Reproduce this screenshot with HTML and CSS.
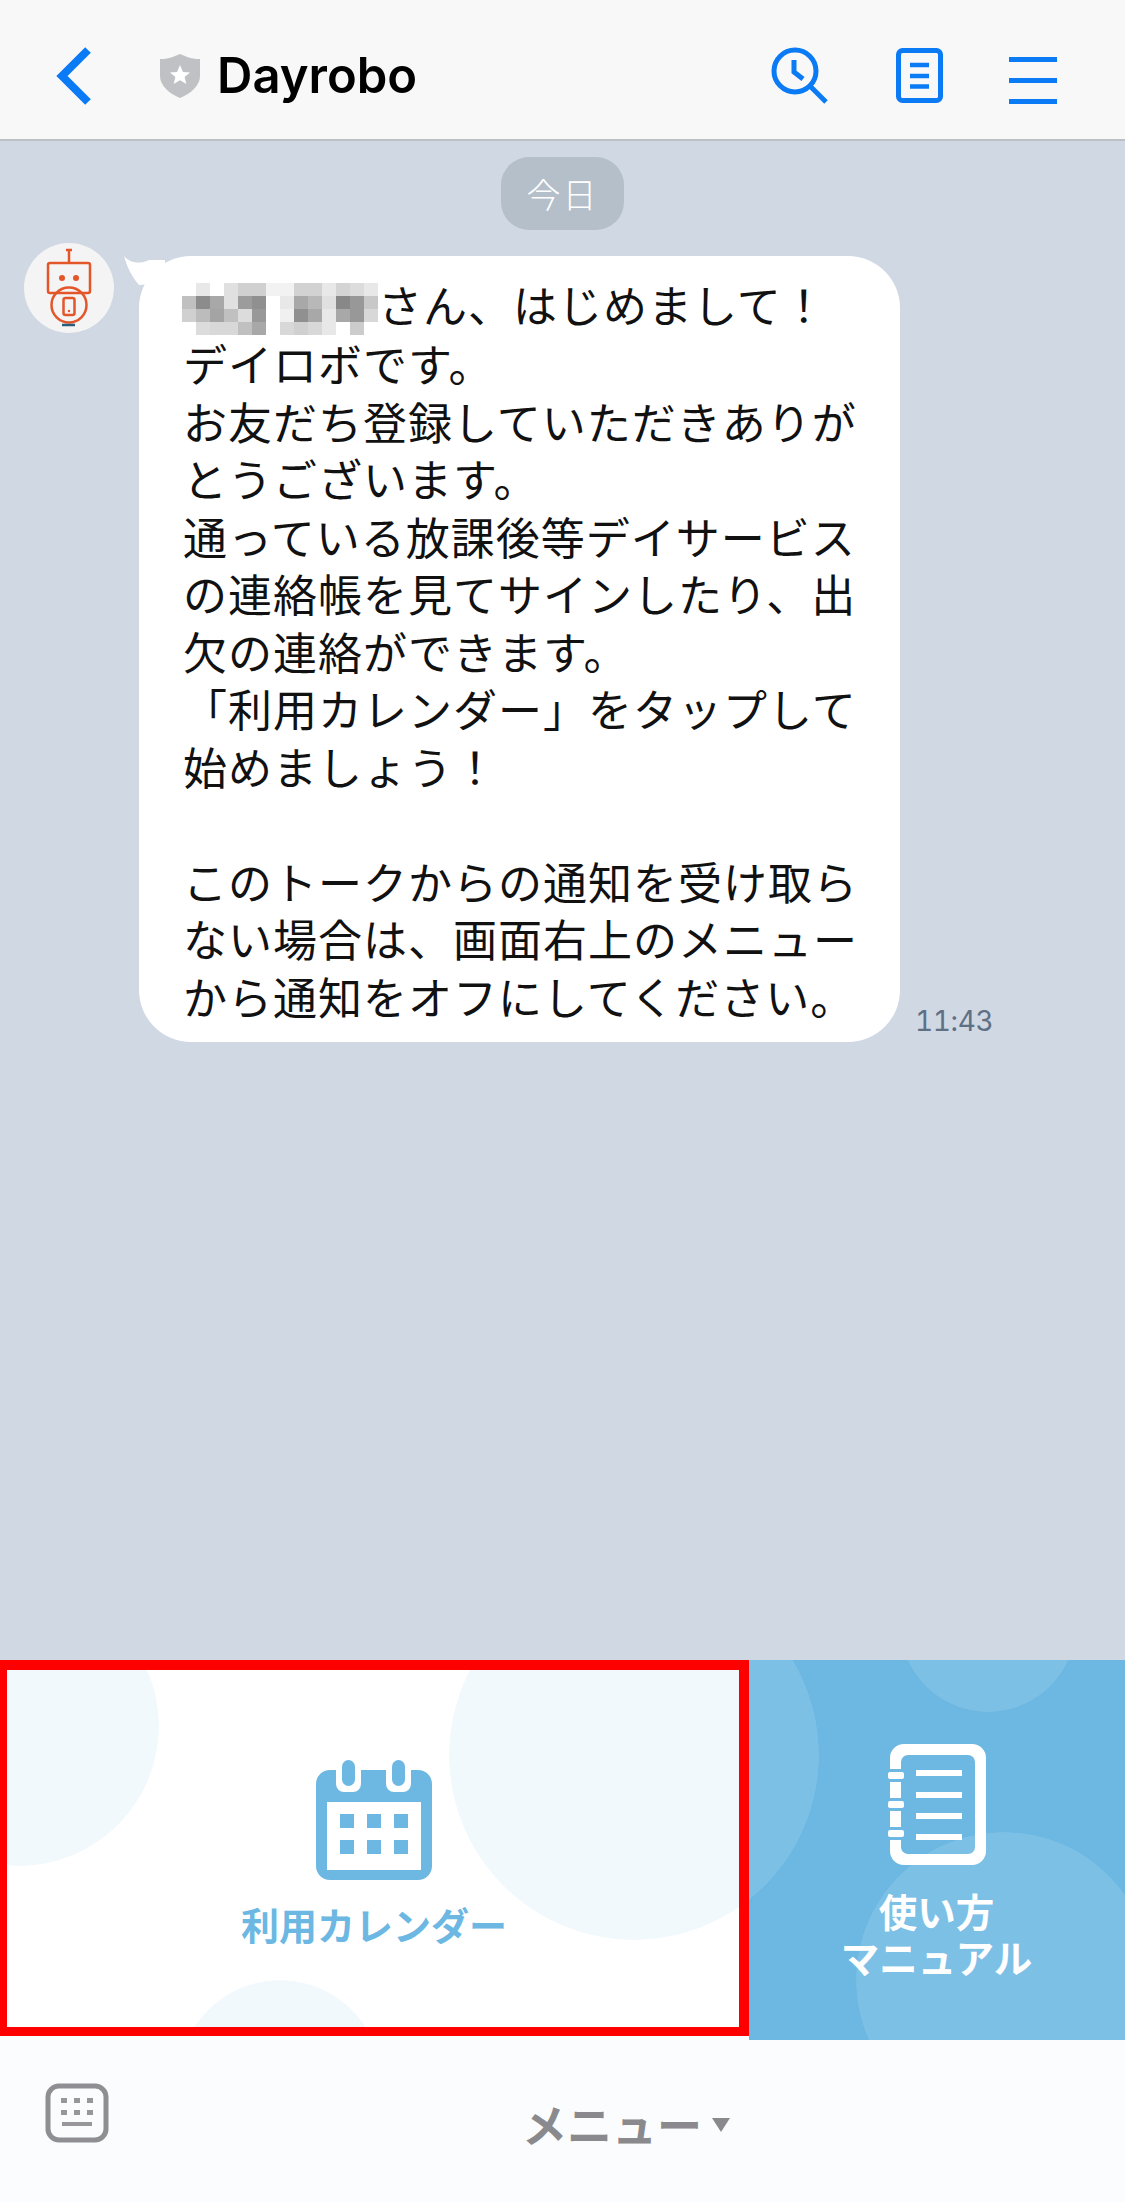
FILE: index.html
```html
<!DOCTYPE html>
<html lang="ja">
<head>
  <meta charset="UTF-8" />
  <meta name="viewport" content="width=device-width, initial-scale=1" />
  <title>Dayrobo</title>
  <link rel="stylesheet" href="styles.css">
</head>
<body>
  <header class="topbar">
    <svg class="back-icon" width="36" height="60" viewBox="0 0 36 60"><path d="M32 4 L6 30 L32 56" fill="none" stroke="#0a7bf5" stroke-width="8"/></svg>
    <svg class="shield-icon" width="40" height="44" viewBox="0 0 40 44">
      <path d="M0 5 C8 5 13 3 20 0 C27 3 32 5 40 5 L40 22 C40 32 30 40 20 44 C10 40 0 32 0 22 Z" fill="#bfc1c4"/>
      <path d="M20 11 L23 18 L30 18.500 L24.600 23 L26.400 30 L20 26.200 L13.600 30 L15.400 23 L10 18.500 L17 18 Z" fill="#fff"/>
    </svg>
    <h1 class="title">Dayrobo</h1>
    <div class="topbar-actions">
      <svg class="history-icon" width="60" height="60" viewBox="0 0 60 60" fill="none" stroke="#0a7bf5" stroke-width="5">
        <circle cx="25" cy="25" r="21"/>
        <path d="M24 14 V26 L33 33"/>
        <path d="M41 41 L56 56"/>
      </svg>
      <svg width="47" height="55" viewBox="0 0 47 55" fill="none" stroke="#0a7bf5">
        <rect x="2.500" y="2.500" width="42" height="50" rx="4" stroke-width="5"/>
        <path d="M14 17 H33 M14 28 H33 M14 38.500 H33" stroke-width="4.500"/>
      </svg>
      <div class="burger"><span></span><span></span><span></span></div>
    </div>
  </header>

  <main class="chat">
    <div class="date-pill">今日</div>
    <div class="message">
      <svg class="avatar" width="90" height="90" viewBox="0 0 90 90">
        <circle cx="45" cy="45" r="45" fill="#f4f4f4"/>
        <g fill="none" stroke="#e2562a" stroke-width="2.500">
          <path d="M45 8 V19"/>
          <path d="M42 7 H48"/>
          <rect x="24" y="20" width="42" height="30" rx="2"/>
          <circle cx="45" cy="62" r="17.500"/>
          <rect x="39.500" y="55" width="11" height="17" rx="2"/>
        </g>
        <circle cx="38" cy="35" r="3" fill="#e2562a"/>
        <circle cx="52" cy="35" r="3" fill="#e2562a"/>
        <circle cx="45" cy="68" r="1.200" fill="#e2562a"/>
        <path d="M38 82 H51" stroke="#2b5d7d" stroke-width="2.500"/>
      </svg>
      <div class="bubble">
        <svg class="bubble-tail" width="42" height="32" viewBox="0 0 42 32"><path d="M1 1 C6 7 15 10 26 5 L42 5 L42 28 L16 30 C9 22 4 12 1 1 Z" fill="#fff"/></svg>
        <svg class="mosaic" width="196" height="52" viewBox="0 0 14 4" preserveAspectRatio="none">
          <rect x="1" y="0" width="1" height="1" fill="#e8e8e8"/><rect x="3" y="0" width="1" height="1" fill="#e0e0e0"/><rect x="4" y="0" width="2" height="1" fill="#d0d0d0"/><rect x="6" y="0" width="2" height="1" fill="#f2f2f2"/><rect x="8" y="0" width="2" height="1" fill="#d2d2d2"/><rect x="10" y="0" width="1" height="1" fill="#e8e8e8"/><rect x="11" y="0" width="1" height="1" fill="#d4d4d4"/><rect x="12" y="0" width="1" height="1" fill="#dcdcdc"/><rect x="13" y="0" width="1" height="1" fill="#e8e8e8"/>
          <rect x="0" y="1" width="1" height="1" fill="#c0c0c0"/><rect x="1" y="1" width="1" height="1" fill="#8c8c8c"/><rect x="2" y="1" width="1" height="1" fill="#a8a8a8"/><rect x="3" y="1" width="1" height="1" fill="#e0e0e0"/><rect x="4" y="1" width="1" height="1" fill="#9c9c9c"/><rect x="5" y="1" width="1" height="1" fill="#909090"/><rect x="7" y="1" width="1" height="1" fill="#e8e8e8"/><rect x="8" y="1" width="1" height="1" fill="#a8a8a8"/><rect x="9" y="1" width="1" height="1" fill="#b8b8b8"/><rect x="10" y="1" width="1" height="1" fill="#e0e0e0"/><rect x="11" y="1" width="1" height="1" fill="#888"/><rect x="12" y="1" width="1" height="1" fill="#989898"/><rect x="13" y="1" width="1" height="1" fill="#c8c8c8"/>
          <rect x="0" y="2" width="1" height="1" fill="#d0d0d0"/><rect x="1" y="2" width="1" height="1" fill="#bcbcbc"/><rect x="2" y="2" width="1" height="1" fill="#a4a4a4"/><rect x="3" y="2" width="1" height="1" fill="#c0c0c0"/><rect x="4" y="2" width="1" height="1" fill="#dcdcdc"/><rect x="5" y="2" width="1" height="1" fill="#989898"/><rect x="7" y="2" width="1" height="1" fill="#f0f0f0"/><rect x="8" y="2" width="1" height="1" fill="#909090"/><rect x="9" y="2" width="1" height="1" fill="#a8a8a8"/><rect x="10" y="2" width="1" height="1" fill="#e8e8e8"/><rect x="11" y="2" width="1" height="1" fill="#a8a8a8"/><rect x="12" y="2" width="1" height="1" fill="#989898"/><rect x="13" y="2" width="1" height="1" fill="#d8d8d8"/>
          <rect x="1" y="3" width="1" height="1" fill="#dcdcdc"/><rect x="2" y="3" width="1" height="1" fill="#d8d8d8"/><rect x="3" y="3" width="1" height="1" fill="#d8d8d8"/><rect x="4" y="3" width="1" height="1" fill="#c0c0c0"/><rect x="5" y="3" width="1" height="1" fill="#a8a8a8"/><rect x="7" y="3" width="1" height="1" fill="#d8d8d8"/><rect x="8" y="3" width="1" height="1" fill="#d0d0d0"/><rect x="9" y="3" width="1" height="1" fill="#d8d8d8"/><rect x="10" y="3" width="1" height="1" fill="#e8e8e8"/><rect x="12" y="3" width="1" height="1" fill="#cccccc"/>
        </svg>さん、はじめまして！<br>
        デイロボです。<br>
        お友だち登録していただきありが<br>
        とうございます。<br>
        通っている放課後等デイサービス<br>
        の連絡帳を見てサインしたり、出<br>
        欠の連絡ができます。<br>
        「利用カレンダー」をタップして<br>
        始めましょう！<br>
        <br>
        このトークからの通知を受け取ら<br>
        ない場合は、画面右上のメニュー<br>
        から通知をオフにしてください。
      </div>
      <time class="sent-at">11:43</time>
    </div>
  </main>

  <section class="richmenu">
    <a class="menu-cell menu-calendar">
      <svg width="116" height="120" viewBox="0 0 116 120">
        <path d="M14 10 H20 V24 A8 8 0 0 0 28 32 H37 A8 8 0 0 0 45 24 V10 H70 V24 A8 8 0 0 0 78 32 H87 A8 8 0 0 0 95 24 V10 H102 A14 14 0 0 1 116 24 V106 A14 14 0 0 1 102 120 H14 A14 14 0 0 1 0 106 V24 A14 14 0 0 1 14 10 Z" fill="#6cb8e2"/>
        <rect x="26" y="0" width="13" height="26" rx="6.500" fill="#6cb8e2"/>
        <rect x="76" y="0" width="13" height="26" rx="6.500" fill="#6cb8e2"/>
        <rect x="11" y="42" width="94" height="68" fill="#fff"/>
        <g fill="#6cb8e2">
          <rect x="24" y="54" width="14" height="14"/><rect x="51" y="54" width="14" height="14"/><rect x="78" y="54" width="14" height="14"/>
          <rect x="24" y="80" width="14" height="14"/><rect x="51" y="80" width="14" height="14"/><rect x="78" y="80" width="14" height="14"/>
        </g>
      </svg>
      <span class="menu-label">利用カレンダー</span>
    </a>
    <a class="menu-cell menu-manual">
      <svg width="98" height="121" viewBox="0 0 98 121" fill="#fff">
        <path d="M16 0 H84 A14 14 0 0 1 98 14 V107 A14 14 0 0 1 84 121 H16 A14 14 0 0 1 2 107 V14 A14 14 0 0 1 16 0 Z M20 11 A7 7 0 0 0 13 18 V103 A7 7 0 0 0 20 110 H80 A7 7 0 0 0 87 103 V18 A7 7 0 0 0 80 11 Z" fill-rule="evenodd"/>
        <g fill="#6cb8e2">
          <rect x="0" y="25" width="16" height="13"/>
          <rect x="0" y="54" width="16" height="13"/>
          <rect x="0" y="83" width="16" height="13"/>
        </g>
        <rect x="0" y="28" width="16" height="7" rx="2"/>
        <rect x="0" y="57" width="16" height="7" rx="2"/>
        <rect x="0" y="86" width="16" height="7" rx="2"/>
        <rect x="28" y="26" width="46" height="6"/>
        <rect x="28" y="48" width="46" height="6"/>
        <rect x="28" y="69" width="46" height="6"/>
        <rect x="28" y="90" width="46" height="6"/>
      </svg>
      <span class="menu-label">使い方<br>マニュアル</span>
    </a>
  </section>

  <footer class="bottombar">
    <svg class="keyboard-icon" width="64" height="60" viewBox="0 0 64 60">
      <rect x="3" y="3" width="58" height="54" rx="11" fill="none" stroke="#8e8e93" stroke-width="5"/>
      <g fill="#97979b">
        <rect x="16" y="15" width="6" height="5"/><rect x="29" y="15" width="6" height="5"/><rect x="42" y="15" width="6" height="5"/>
        <rect x="16" y="27" width="6" height="5"/><rect x="29" y="27" width="6" height="5"/><rect x="42" y="27" width="6" height="5"/>
        <rect x="17" y="39" width="30" height="4"/>
      </g>
    </svg>
    <div class="menu-toggle">メニュー<span class="menu-caret"></span></div>
  </footer>
</body>
</html>
```

FILE: styles.css
```css
* {
  box-sizing: border-box;
}
body {
  margin: 0;
  width: 1125px;
  height: 2202px;
  display: flex;
  flex-direction: column;
  overflow: hidden;
  font-family: "Noto Sans CJK JP", "Noto Sans", sans-serif;
  background-color: #d0d8e4;
}
.topbar {
  height: 141px;
  flex: none;
  display: flex;
  align-items: center;
  padding-left: 56px;
  padding-top: 12px;
  background-color: #f8f8f8;
  border-bottom: 2px solid #bcbfc4;
}
.shield-icon {
  margin-left: 68px;
}
.title {
  margin: 0 0 0 17px;
  font-family: Inter, sans-serif;
  font-size: 49px;
  font-weight: 600;
  color: #000;
}
.topbar-actions {
  margin-left: auto;
  display: flex;
  align-items: center;
  gap: 70px;
  padding-right: 68px;
}
.topbar-actions svg {
  display: block;
}
.history-icon {
  margin-right: -4px;
}
.burger {
  width: 48px;
  display: flex;
  flex-direction: column;
  gap: 16px;
  margin-top: 9px;
  margin-left: -4px;
}
.burger span {
  height: 5px;
  background-color: #0a7bf5;
}
.chat {
  flex: 1;
  padding-top: 16px;
}
.date-pill {
  width: 123px;
  height: 73px;
  margin-left: 501px;
  display: flex;
  align-items: center;
  justify-content: center;
  border-radius: 28px;
  background-color: #b4bfca;
  color: #fff;
  font-size: 34px;
  font-weight: 300;
  letter-spacing: 2px;
}
.message {
  display: flex;
  align-items: flex-start;
  padding-left: 24px;
  margin-top: 13px;
}
.avatar {
  flex: none;
}
.bubble {
  position: relative;
  margin-left: 25px;
  margin-top: 13px;
  width: 761px;
  height: 786px;
  padding: 20px 0 0 44px;
  border-radius: 52px;
  background-color: #fff;
  color: #111;
  font-size: 44px;
  line-height: 57.5px;
  letter-spacing: 1px;
  white-space: nowrap;
}
.bubble-tail {
  position: absolute;
  left: -16px;
  top: -1px;
}
.mosaic {
  vertical-align: -12px;
  margin-left: -1px;
}
.sent-at {
  align-self: flex-end;
  margin-left: 15px;
  margin-bottom: 4px;
  font-family: Inter, sans-serif;
  font-size: 28px;
  font-variant-numeric: tabular-nums;
  letter-spacing: -0.4px;
  line-height: 34px;
  color: #5f7085;
}
.richmenu {
  height: 380px;
  flex: none;
  display: flex;
  align-items: flex-start;
  background-color: #fbfcfd;
}
.menu-cell {
  display: flex;
  flex-direction: column;
  align-items: center;
  font-weight: 700;
  line-height: 46px;
  text-align: center;
}
.menu-calendar {
  width: 749px;
  height: 376px;
  padding-top: 90px;
  border-style: solid;
  border-color: #fe0000;
  border-width: 10px 10px 9px 7px;
  color: #6cb8e2;
  background-color: #fff;
  background-origin: border-box;
  background-clip: border-box;
  background-image:
    radial-gradient(circle 140px at 19px 66px, #f1f9fc 99.6%, transparent 100%),
    radial-gradient(circle 185px at 634px 95px, #f1f9fc 99.7%, transparent 100%),
    radial-gradient(circle 102px at 280px 422px, #f1f9fc 99.4%, transparent 100%);
  background-repeat: no-repeat;
}
.menu-calendar .menu-label {
  margin-top: 21px;
  margin-left: 2px;
  font-size: 38px;
}
.menu-calendar svg {
  margin-left: 2px;
}
.menu-manual {
  width: 376px;
  height: 380px;
  padding-top: 84px;
  color: #fff;
  background-color: #6cb8e2;
  background-image:
    radial-gradient(circle 185px at -115px 95px, #7dc0e6 99.7%, transparent 100%),
    radial-gradient(circle 88px at 239px -36px, #7dc0e6 99.4%, transparent 100%),
    radial-gradient(circle 148px at 255px 320px, #7dc0e6 99.6%, transparent 100%);
}
.menu-manual .menu-label {
  margin-top: 22px;
  margin-left: -1px;
  font-size: 38.500px;
}
.bottombar {
  height: 162px;
  flex: none;
  display: flex;
  align-items: center;
  padding-left: 45px;
  background-color: #fbfcfd;
}
.keyboard-icon {
  margin-top: -16px;
}
.menu-toggle {
  display: flex;
  align-items: center;
  margin-left: 413px;
  margin-top: 5px;
  color: #8a8a8e;
  font-size: 45px;
  font-weight: 700;
  line-height: 60px;
}
.menu-caret {
  margin-left: 10px;
  margin-top: 3px;
  border-left: 9px solid transparent;
  border-right: 9px solid transparent;
  border-top: 14px solid #8a8a8e;
}
```
